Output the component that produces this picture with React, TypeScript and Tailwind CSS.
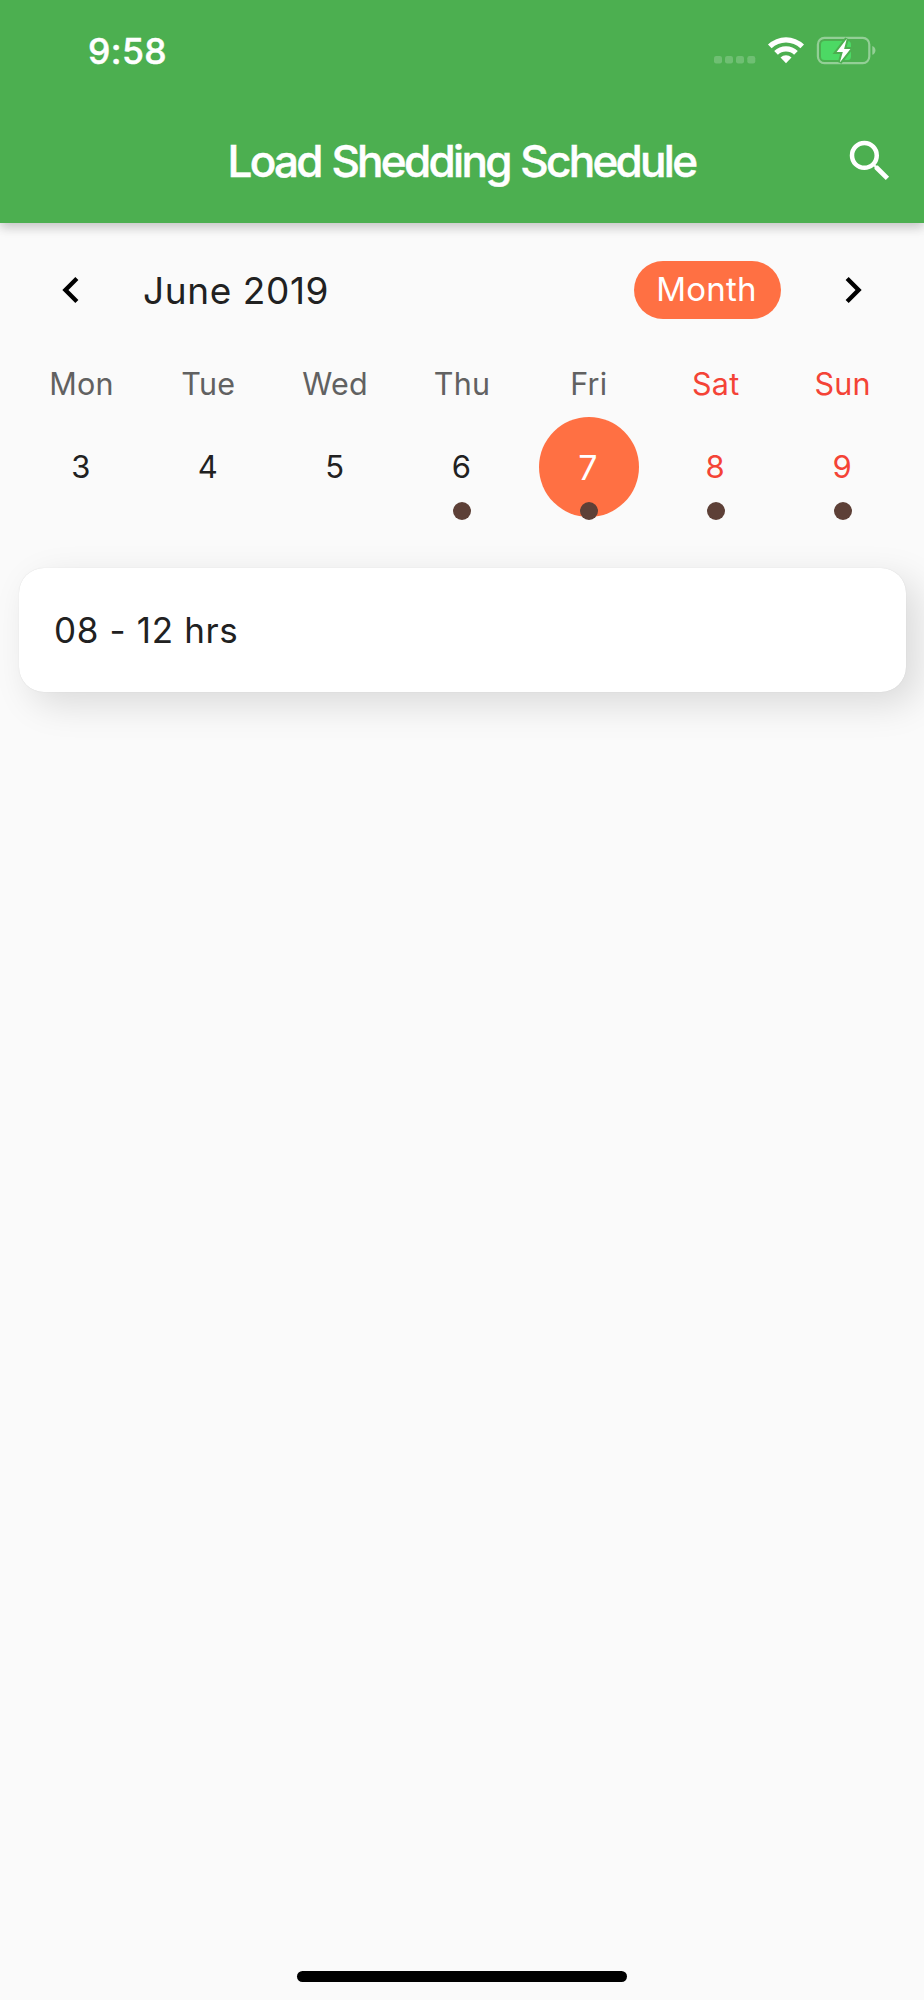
import React from "react";

type Day = { name: string; date: number; weekend?: boolean; selected?: boolean; event?: boolean };

const week: Day[] = [
  { name: "Mon", date: 3 },
  { name: "Tue", date: 4 },
  { name: "Wed", date: 5 },
  { name: "Thu", date: 6, event: true },
  { name: "Fri", date: 7, selected: true, event: true },
  { name: "Sat", date: 8, weekend: true, event: true },
  { name: "Sun", date: 9, weekend: true, event: true },
];

function StatusIcons() {
  return (
    <svg className="mr-12 h-[30px] w-[164px]" viewBox="712 35 164 30" fill="none">
      <g fill="#fff" fillOpacity="0.2">
        <rect x="714" y="56" width="8" height="7.5" rx="2.2" />
        <rect x="725" y="56" width="8" height="7.5" rx="2.2" />
        <rect x="736" y="56" width="8" height="7.5" rx="2.2" />
        <rect x="747.3" y="56" width="8" height="7.5" rx="2.2" />
      </g>
      <g fill="#fff">
        <path d="M768 44.6a26 26 0 0 1 36 0l-3.6 3.7a20.8 20.8 0 0 0-28.8 0z" />
        <path d="M774.2 51a17 17 0 0 1 23.6 0l-3.7 3.7a11.8 11.8 0 0 0-16.2 0z" />
        <path d="M780.5 57.4a8.2 8.2 0 0 1 11 0L786 63.2z" />
      </g>
      <rect x="817.9" y="37.9" width="51.4" height="25.2" rx="6.5" stroke="#fff" strokeOpacity="0.4" strokeWidth="2.2" />
      <path d="M872.3 46c4.2 1.6 4.2 7.2 0 8.8z" fill="#fff" fillOpacity="0.4" />
      <rect x="821" y="41" width="30" height="19" rx="3.5" fill="#4cd964" />
      <path d="M846.8 38.8L836.6 51.9h6.2l-3 10.6L850.4 49h-6.3z" fill="#fff" stroke="#4caf50" strokeWidth="4" paintOrder="stroke" />
    </svg>
  );
}

export default function App() {
  return (
    <div className="flex h-[2000px] w-[924px] flex-col overflow-hidden bg-[#fafafa] font-['Inter',sans-serif] text-[#212121]">
      <header className="flex h-[223px] shrink-0 flex-col bg-[#4caf50] text-white shadow-[0_5px_10px_rgba(0,0,0,0.14),0_2px_12px_rgba(0,0,0,0.1)]">
        <div className="flex h-[100px] items-center justify-between">
          <span className="mt-[3px] ml-[88px] text-[35.5px] leading-none font-medium tracking-[0.4px] [-webkit-text-stroke:0.5px_white]">9:58</span>
          <StatusIcons />
        </div>
        <div className="flex h-[121px] items-center justify-between pr-[27px]">
          <div className="w-[54px]" />
          <h1 className="ml-[26px] text-[44px] leading-none font-medium tracking-[-2.7px] [word-spacing:1.5px] whitespace-nowrap [-webkit-text-stroke:0.5px_white]">
            Load Shedding Schedule
          </h1>
          <svg className="h-[54px] w-[54px]" viewBox="0 0 24 24" fill="currentColor">
            <path d="M15.5 14h-.79l-.28-.27A6.471 6.471 0 0 0 16 9.5 6.5 6.5 0 1 0 9.5 16c1.61 0 3.09-.59 4.23-1.57l.27.28v.79l5 4.99L20.49 19l-4.99-5zm-6 0C7.01 14 5 11.99 5 9.5S7.01 5 9.5 5 14 7.01 14 9.5 11.99 14 9.5 14z" />
          </svg>
        </div>
      </header>

      <div className="flex h-[134px] shrink-0 items-center pr-[45px] pl-[45px]">
        <svg className="h-[52px] w-[52px]" viewBox="0 0 24 24" fill="#000">
          <path d="M15.41 7.41L14 6l-6 6 6 6 1.41-1.41L10.83 12z" />
        </svg>
        <span className="mt-px ml-[46px] flex-1 text-[37px] leading-none tracking-[0.6px]">June 2019</span>
        <span className="flex h-[58px] w-[147px] items-center justify-center rounded-full bg-[#ff7043] pr-[2px] pb-px text-[33px] leading-none tracking-[0.2px] text-white">
          Month
        </span>
        <svg className="ml-[46px] h-[52px] w-[52px]" viewBox="0 0 24 24" fill="#000">
          <path d="M10 6L8.59 7.41 13.17 12l-4.58 4.59L10 18l6-6z" />
        </svg>
      </div>

      <div className="grid shrink-0 grid-cols-7 px-[18px]">
        {week.map((d) => (
          <div key={d.name} className={d.weekend ? "flex flex-col items-center text-[#f44336]" : "flex flex-col items-center"}>
            <span className={d.weekend ? "flex h-[60px] items-center pb-[6px] text-[30.5px] tracking-[0.2px]" : "flex h-[60px] items-center pb-[6px] text-[30.5px] tracking-[0.2px] text-[#616161]"}>
              {d.name}
            </span>
            <span
              className={
                d.selected
                  ? "relative flex h-[100px] w-[100px] items-center justify-center rounded-full bg-[#ff7043] pr-[2px] text-[34px] text-white"
                  : "relative flex h-[100px] w-[100px] items-center justify-center pr-px text-[31px]"
              }
            >
              {d.date}
              {d.event && <i className="absolute top-[85px] left-[41px] h-[18px] w-[18px] rounded-full bg-[#5d4037]" />}
            </span>
          </div>
        ))}
      </div>

      <div className="mt-[51px] mr-[18px] ml-[19px] flex h-[124px] shrink-0 items-center rounded-[25px] bg-white pl-[35px] text-[35px] leading-none tracking-[0.65px] shadow-[12px_12px_37px_rgba(0,0,0,0.13),0_0_1px_rgba(0,0,0,0.15)]">
        08 - 12 hrs
      </div>

      <div className="mx-auto mt-auto mb-[18px] h-[11px] w-[330px] shrink-0 rounded-full bg-black" />
    </div>
  );
}
